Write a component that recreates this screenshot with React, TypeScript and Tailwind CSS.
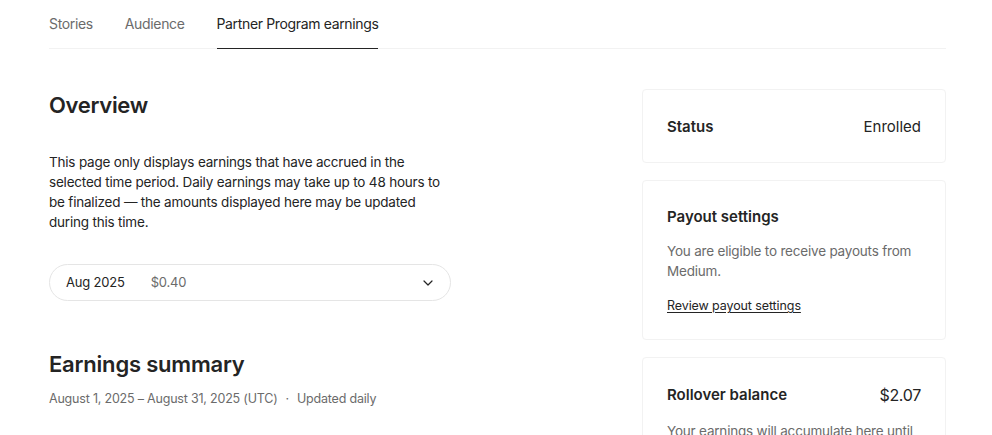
import { ChevronDown } from "lucide-react";

const font = { fontFamily: "Inter, 'Liberation Sans', sans-serif" };

function Tabs() {
  const tabs = ["Stories", "Audience", "Partner Program earnings"];
  return (
    <nav className="flex gap-8 border-b border-[#f2f2f2] text-[14px] tracking-[-0.35px]">
      {tabs.map((tab, i) => (
        <div
          key={tab}
          className={`pt-[13px] pb-[14px] ${i === 2 ? "-mb-px border-b border-[#242424] text-[#242424]" : "text-[#6b6b6b]"}`}
        >
          {tab}
        </div>
      ))}
    </nav>
  );
}

function Card({ children, className = "" }: { children: React.ReactNode; className?: string }) {
  return (
    <div className={`rounded-[4px] border border-[#f2f2f2] px-6 ${className}`}>
      {children}
    </div>
  );
}

function App() {
  return (
    <main className="min-h-screen bg-white text-[#242424]" style={font}>
      <div className="ml-[49px] w-[897px]">
        <Tabs />
        <div className="flex justify-between pt-[40px]">
          <section className="w-[402px]">
            <h1 className="text-[22px] leading-[32px] font-semibold tracking-[-0.3px]">Overview</h1>
            <p className="mt-[31px] text-[13.5px] leading-[20px] tracking-[-0.2px] text-[#242424]">
              This page only displays earnings that have accrued in the selected time period. Daily earnings may take up to 48 hours to be finalized — the amounts displayed here may be updated during this time.
            </p>
            <button className="mt-[32px] flex h-[37px] w-full items-center rounded-full border border-[#e5e5e5] pr-[14px] pl-[16px] text-[13px] tracking-[-0.2px]">
              <span className="text-[#242424]">Aug 2025</span>
              <span className="ml-[26px] text-[#6b6b6b]">$0.40</span>
              <ChevronDown className="ml-auto size-4 text-[#242424]" strokeWidth={1.8} />
            </button>
            <h2 className="mt-[47px] text-[22px] leading-[32px] font-semibold tracking-[-0.2px]">Earnings summary</h2>
            <div className="mt-[10px] flex items-center text-[12.5px] tracking-[-0.2px] text-[#6b6b6b]">
              <span>August 1, 2025 – August 31, 2025 (UTC)</span>
              <span className="mx-[8px]">·</span>
              <span>Updated daily</span>
            </div>
          </section>
          <aside className="flex w-[304px] flex-col gap-[17px]">
            <Card className="flex h-[74px] items-center justify-between pt-[2px]">
              <span className="text-[15px] font-semibold">Status</span>
              <span className="text-[15px]">Enrolled</span>
            </Card>
            <Card className="pt-[24px] pb-[23px]">
              <div className="text-[15px] leading-[24px] font-semibold">Payout settings</div>
              <p className="mt-[12px] text-[13.5px] leading-[20px] tracking-[-0.2px] text-[#6b6b6b]">
                You are eligible to receive payouts from Medium.
              </p>
              <a className="mt-[15px] block text-[12.5px] leading-[20px] tracking-[-0.1px] underline underline-offset-2">Review payout settings</a>
            </Card>
            <Card className="pt-[25px] pb-[24px]">
              <div className="flex items-center justify-between leading-[24px]">
                <span className="text-[15px] font-semibold">Rollover balance</span>
                <span className="text-[16px] tracking-[-0.3px]">$2.07</span>
              </div>
              <p className="mt-[14px] text-[13.5px] leading-[20px] tracking-[-0.2px] text-[#6b6b6b]">
                Your earnings will accumulate here until they reach the minimum payout threshold.
              </p>
            </Card>
          </aside>
        </div>
      </div>
    </main>
  );
}

export default App;
